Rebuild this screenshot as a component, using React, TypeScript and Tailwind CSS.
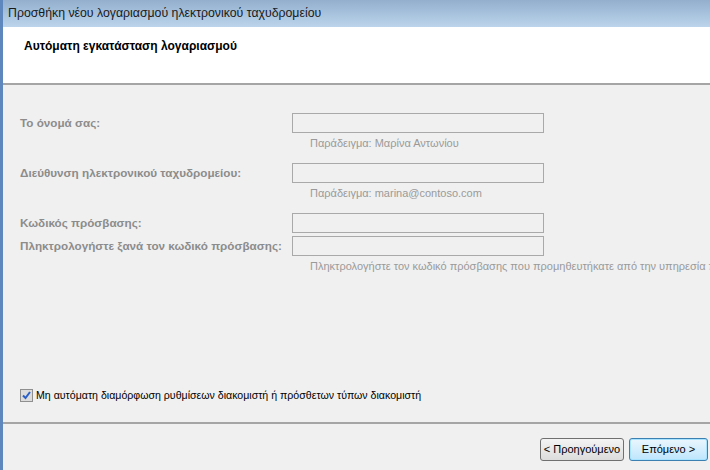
import React from 'react';

const font = { fontFamily: '"Liberation Sans", "DejaVu Sans", sans-serif' };

const Field: React.FC<{ label: string; hint?: string; className?: string }> = ({ label, hint, className }) => (
  <div className={className}>
    <div className="flex items-center h-[20px]">
      <div className="w-[272px] text-[11.7px] font-bold text-[#8c8c8c] whitespace-nowrap">{label}</div>
      <div className="w-[252px] h-[20px] border border-[#a9a9a9] bg-[#f0f0f0]" />
    </div>
    {hint && (
      <div className="pl-[290px] mt-[2px] text-[11px] leading-[16px] text-[#9a9a9a] whitespace-nowrap">{hint}</div>
    )}
  </div>
);

export default function App() {
  return (
    <div className="w-[710px] h-[470px] overflow-hidden bg-[#f0f0f0] flex text-[#000]" style={font}>
      <div className="w-[3px] bg-[#5e88bd] shrink-0" />
      <div className="flex-1 flex flex-col min-w-0">
        <div className="h-[27px] shrink-0 bg-gradient-to-b from-[#93afcd] to-[#bcd5ec] flex items-center pl-[5px] text-[12.3px] text-[#1a1a1a] whitespace-nowrap">
          Προσθήκη νέου λογαριασμού ηλεκτρονικού ταχυδρομείου
        </div>
        <div className="h-[58px] shrink-0 bg-white border-b-2 border-[#a5a5a5] pl-[21px] pt-[10px] text-[12px] font-bold">
          Αυτόματη εγκατάσταση λογαριασμού
        </div>
        <div className="flex-1 pl-[17px] pt-[28px]">
          <Field label="Το όνομά σας:" hint="Παράδειγμα: Μαρίνα Αντωνίου" />
          <Field className="mt-[12px]" label="Διεύθυνση ηλεκτρονικού ταχυδρομείου:" hint="Παράδειγμα: marina@contoso.com" />
          <Field className="mt-[12px]" label="Κωδικός πρόσβασης:" />
          <Field
            className="mt-[3px]"
            label="Πληκτρολογήστε ξανά τον κωδικό πρόσβασης:"
            hint="Πληκτρολογήστε τον κωδικό πρόσβασης που προμηθευτήκατε από την υπηρεσία παροχής υπηρεσιών Internet."
          />
          <label className="flex items-center gap-[3px] mt-[114px] text-[10.6px] whitespace-nowrap">
            <span className="w-[13px] h-[13px] border border-[#8f8f8f] bg-[#dcdcdc] flex items-center justify-center">
              <svg width="11" height="11" viewBox="0 0 11 11">
                <path d="M2 5.5 L4.5 8 L9 2" fill="none" stroke="#2a5fc7" strokeWidth="2" />
              </svg>
            </span>
            Μη αυτόματη διαμόρφωση ρυθμίσεων διακομιστή ή πρόσθετων τύπων διακομιστή
          </label>
        </div>
        <div className="h-[48px] shrink-0 border-t-2 border-[#a5a5a5] flex items-start justify-end gap-[5px] pt-[14px] pr-[2px]">
          <button className="w-[84px] h-[23px] border border-[#707070] rounded-[3px] bg-gradient-to-b from-[#f4f4f4] to-[#dcdcdc] text-[11px] whitespace-nowrap">
            &lt; Προηγούμενο
          </button>
          <button className="w-[79px] h-[23px] border border-[#3c7fb1] rounded-[3px] bg-gradient-to-b from-[#eaf6fd] to-[#bee6fd] text-[11px] whitespace-nowrap shadow-[inset_0_0_0_1px_#a7e2ff]">
            Επόμενο &gt;
          </button>
        </div>
      </div>
    </div>
  );
}
